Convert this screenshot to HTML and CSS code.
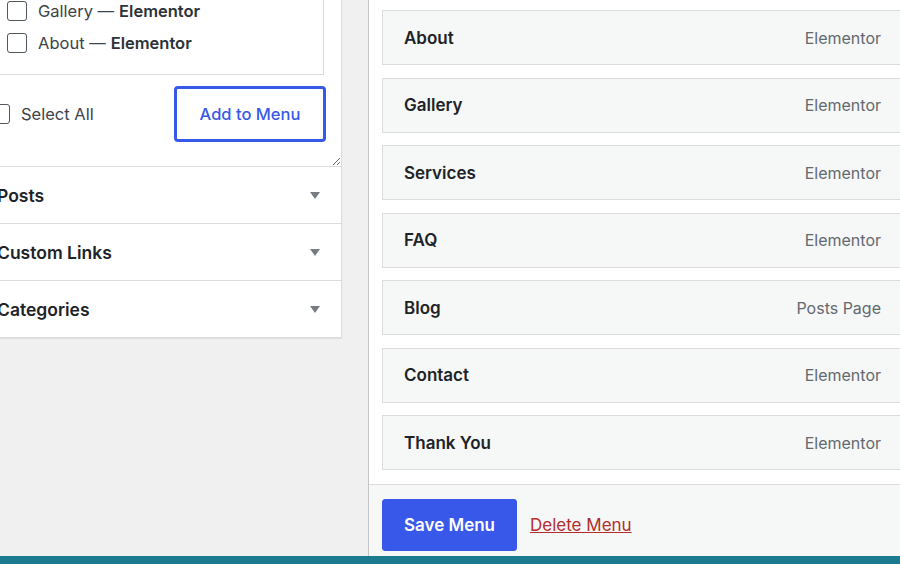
FILE: index.html
```html
<!DOCTYPE html>
<html lang="en">
<head>
    <meta charset="UTF-8">
    <meta name="viewport" content="width=device-width, initial-scale=1.0">
    <title>Menus</title>
    <link rel="stylesheet" href="styles.css">
</head>
<body>
    <div class="screen">
        <div class="side">
            <div class="side-box">
                <ul class="page-list">
                    <li><span class="check"></span>Home — <b>Front Page</b></li>
                    <li><span class="check"></span>Gallery — <b>Elementor</b></li>
                    <li><span class="check"></span>About — <b>Elementor</b></li>
                </ul>
                <div class="page-actions">
                    <label class="select-all"><span class="check"></span>Select All</label>
                    <button class="btn-add">Add to Menu</button>
                </div>
            </div>
            <div class="acc">
                <span>Posts</span>
                <svg class="arrow" width="10" height="7" viewBox="0 0 10 7"><polygon points="0,0 10,0 5,7"/></svg>
            </div>
            <div class="acc">
                <span>Custom Links</span>
                <svg class="arrow" width="10" height="7" viewBox="0 0 10 7"><polygon points="0,0 10,0 5,7"/></svg>
            </div>
            <div class="acc">
                <span>Categories</span>
                <svg class="arrow" width="10" height="7" viewBox="0 0 10 7"><polygon points="0,0 10,0 5,7"/></svg>
            </div>
        </div>

        <div class="main">
            <ul class="menu-items">
                <li class="menu-item"><span class="item-title">About</span><span class="item-type">Elementor</span></li>
                <li class="menu-item"><span class="item-title">Gallery</span><span class="item-type">Elementor</span></li>
                <li class="menu-item"><span class="item-title">Services</span><span class="item-type">Elementor</span></li>
                <li class="menu-item"><span class="item-title">FAQ</span><span class="item-type">Elementor</span></li>
                <li class="menu-item"><span class="item-title">Blog</span><span class="item-type">Posts Page</span></li>
                <li class="menu-item"><span class="item-title">Contact</span><span class="item-type">Elementor</span></li>
                <li class="menu-item"><span class="item-title">Thank You</span><span class="item-type">Elementor</span></li>
            </ul>
            <div class="footer">
                <button class="btn-save">Save Menu</button>
                <a class="delete" href="#">Delete Menu</a>
            </div>
        </div>
    </div>
    <div class="bar"></div>
</body>
</html>
```

FILE: styles.css
```css
html, body {
    margin: 0;
    height: 100%;
    overflow: hidden;
}
body {
    font-family: Inter, "Noto Sans", sans-serif;
    background-color: #f0f0f1;
    color: #1d2327;
}
.screen {
    display: flex;
    align-items: flex-start;
    height: 556px;
}

/* left column */
.side {
    flex: 0 0 auto;
    width: 360px;
    margin: -40px 0 0 -20px;
    background-color: #fff;
    border: 1px solid #dcdcde;
    box-shadow: 0 1px 1px rgba(0,0,0,0.06);
}
.side-box {
    height: 182px;
    padding: 0 15px 23px 9px;
    overflow: auto;
    resize: vertical;
}
.page-list {
    list-style: none;
    margin: 0 2px 0 3px;
    padding: 2px 0 15px 13px;
    background-color: #fff;
    border: 1px solid #dcdcde;
    border-top: none;
}
.page-list li {
    display: flex;
    align-items: center;
    height: 32px;
    font-size: 16.5px;
    color: #3c434a;
}
.page-list b {
    font-weight: 600;
    margin-left: 5px;
    color: #2c3338;
}
.check {
    box-sizing: border-box;
    width: 20px;
    height: 20px;
    margin-right: 11px;
    border: 1.5px solid #50575e;
    border-radius: 3px;
    background-color: #fff;
}
.page-actions {
    display: flex;
    justify-content: space-between;
    align-items: center;
    margin-top: 11px;
}
.select-all {
    display: flex;
    align-items: center;
    font-size: 16.5px;
    color: #3c434a;
}
.btn-add {
    width: 152px;
    height: 56px;
    font-family: inherit;
    font-size: 16.5px;
    font-weight: 500;
    color: #3858e9;
    background-color: #fff;
    border: 3px solid #3858e9;
    border-radius: 4px;
}
.acc {
    display: flex;
    justify-content: space-between;
    align-items: center;
    height: 56px;
    padding: 0 21px 0 16px;
    border-top: 1px solid #dcdcde;
    font-size: 17.5px;
    font-weight: 600;
}
.arrow {
    fill: #787c82;
}

/* right column */
.main {
    flex: 0 0 auto;
    align-self: stretch;
    width: 545px;
    margin-left: 26px;
    background-color: #fff;
    border-left: 1px solid #c3c4c7;
    display: flex;
    flex-direction: column;
}
.menu-items {
    list-style: none;
    margin: 0;
    padding: 10px 12px 14px 13px;
    display: flex;
    flex-direction: column;
    gap: 12.5px;
}
.menu-item {
    box-sizing: border-box;
    height: 55px;
    display: flex;
    justify-content: space-between;
    align-items: center;
    padding: 0 20px 0 21px;
    background-color: #f6f7f7;
    border: 1px solid #dcdcde;
}
.item-title {
    font-size: 17px;
    font-weight: 600;
    color: #1d2327;
}
.item-type {
    font-size: 16px;
    color: #646970;
}
.footer {
    flex: 1;
    display: flex;
    align-items: flex-start;
    gap: 13px;
    padding: 14px 13px 0;
    background-color: #f6f7f7;
    border-top: 1px solid #dcdcde;
}
.btn-save {
    width: 135px;
    height: 52px;
    font-family: inherit;
    font-size: 17px;
    font-weight: 600;
    color: #fff;
    background-color: #3858e9;
    border: 1px solid #3858e9;
    border-radius: 3px;
}
.delete {
    margin-top: 16px;
    font-size: 17px;
    color: #b32d2e;
}
.bar {
    height: 8px;
    background-color: #1b7a8e;
}
```
